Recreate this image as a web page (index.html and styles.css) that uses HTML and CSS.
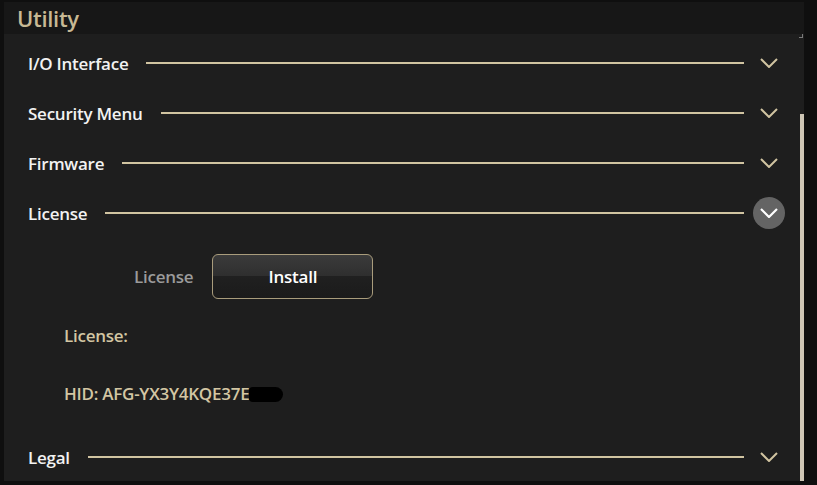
FILE: index.html
```html
<!DOCTYPE html>
<html>
<head>
<meta charset="utf-8">
<link rel="stylesheet" href="styles.css">
</head>
<body>
<div class="panel">
  <div class="header"><span class="title">Utility</span></div>
  <div class="body">
    <div class="content">
      <div class="row">
        <span class="label">I/O Interface</span><span class="rule"></span>
        <span class="chev"><svg width="18" height="10" viewBox="0 0 18 10"><path d="M1 1 L9 9 L17 1" fill="none" stroke="#d1c4a1" stroke-width="2"/></svg></span>
      </div>
      <div class="row">
        <span class="label">Security Menu</span><span class="rule"></span>
        <span class="chev"><svg width="18" height="10" viewBox="0 0 18 10"><path d="M1 1 L9 9 L17 1" fill="none" stroke="#d1c4a1" stroke-width="2"/></svg></span>
      </div>
      <div class="row">
        <span class="label">Firmware</span><span class="rule"></span>
        <span class="chev"><svg width="18" height="10" viewBox="0 0 18 10"><path d="M1 1 L9 9 L17 1" fill="none" stroke="#d1c4a1" stroke-width="2"/></svg></span>
      </div>
      <div class="row">
        <span class="label">License</span><span class="rule"></span>
        <span class="chev open"><svg width="18" height="10" viewBox="0 0 18 10"><path d="M1 1 L9 9 L17 1" fill="none" stroke="#ffffff" stroke-width="2.2"/></svg></span>
      </div>
      <div class="section">
        <div class="opt">
          <span class="opt-label">License</span>
          <button class="btn">Install</button>
        </div>
        <div class="info first">License:</div>
        <div class="info second">HID: AFG-YX3Y4KQE37E<span class="redact"></span></div>
      </div>
      <div class="row">
        <span class="label">Legal</span><span class="rule"></span>
        <span class="chev"><svg width="18" height="10" viewBox="0 0 18 10"><path d="M1 1 L9 9 L17 1" fill="none" stroke="#d1c4a1" stroke-width="2"/></svg></span>
      </div>
    </div>
    <div class="scroll">
      <div class="grip"></div>
      <div class="thumb"></div>
    </div>
  </div>
</div>
</body>
</html>
```
FILE: styles.css
```css
html, body {
  margin: 0;
  padding: 0;
  background: #0f0f0f;
  width: 817px;
  height: 485px;
  overflow: hidden;
  font-family: "Open Sans", "Noto Sans", sans-serif;
}
.panel {
  margin: 2px 0 0 4px;
  width: 800px;
  height: 479px;
  display: flex;
  flex-direction: column;
  overflow: hidden;
}
.header {
  height: 32px;
  background: #171717;
  display: flex;
  align-items: center;
  padding-left: 13px;
  flex: none;
}
.title {
  color: #c8b994;
  font-size: 22px;
  font-weight: 600;
  letter-spacing: -0.3px;
  line-height: 32px;
}
.body {
  flex: 1;
  display: flex;
  background: #1e1e1e;
  overflow: hidden;
}
.content {
  flex: 1;
  padding-top: 4px;
}
.row {
  height: 50px;
  display: flex;
  align-items: center;
  padding-left: 24px;
  padding-right: 15px;
}
.label {
  color: #f2f2f2;
  font-size: 17px;
  font-weight: 600;
  letter-spacing: -0.25px;
  margin-right: 18px;
  white-space: nowrap;
}
.rule {
  flex: 1;
  height: 2px;
  background: #d1c4a1;
  margin-right: 9px;
}
.chev {
  width: 32px;
  height: 32px;
  display: flex;
  align-items: center;
  justify-content: center;
  border-radius: 50%;
}
.chev svg { display: block; }
.chev.open { background: #646464; }
.section {
  height: 194px;
  padding-top: 16px;
  box-sizing: border-box;
}
.opt {
  display: flex;
  align-items: center;
  padding-left: 130px;
  height: 45px;
}
.opt-label {
  color: #9b9b9b;
  font-size: 17px;
  font-weight: 600;
  letter-spacing: -0.25px;
  margin-right: 19px;
}
.btn {
  width: 161px;
  height: 45px;
  border: 1px solid #a99c7c;
  border-radius: 6px;
  background: linear-gradient(to bottom, #3b3b3b 0%, #2f2f2f 48%, #202020 50%, #1b1b1b 100%);
  color: #ffffff;
  font-family: "Open Sans", "Noto Sans", sans-serif;
  font-size: 17px;
  font-weight: 600;
  letter-spacing: -0.25px;
  padding: 0;
}
.info {
  color: #d3c6a3;
  font-size: 17px;
  font-weight: 600;
  letter-spacing: -0.25px;
  line-height: 24px;
  padding-left: 60px;
  display: flex;
  align-items: center;
}
.info.first { margin-top: 25px; }
.info.second { margin-top: 34px; }
.redact {
  display: inline-block;
  width: 34px;
  height: 15px;
  background: #000;
  border-radius: 4px 8px 8px 4px;
}
.scroll {
  width: 4px;
  flex: none;
  display: flex;
  flex-direction: column;
}
.grip {
  width: 3px;
  height: 3px;
  border-right: 1px solid #7a7a7a;
  border-bottom: 1px solid #7a7a7a;
  box-sizing: content-box;
  margin-left: -1px;
}
.thumb {
  margin-top: 76px;
  flex: 1;
  background: #cdc5b5;
}
```
